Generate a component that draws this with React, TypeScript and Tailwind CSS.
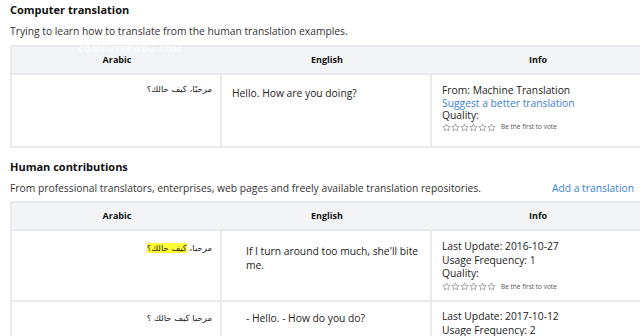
import React from 'react'

const font = { fontFamily: '"Open Sans", "DejaVu Sans", sans-serif' }
const arabic = { fontFamily: '"DejaVu Sans", "Noto Sans", sans-serif' }

function Stars() {
    return (
        <div className="flex items-center gap-[5px] h-[12px]">
            <div className="flex">
                {[0, 1, 2, 3, 4, 5].map((i) => (
                    <svg key={i} width="9" height="9" viewBox="0 0 24 24">
                        <path
                            d="M12 2.5l2.9 6.3 6.9.7-5.2 4.6 1.5 6.8L12 17.4 5.9 20.9l1.5-6.8L2.2 9.5l6.9-.7z"
                            fill="none"
                            stroke="#777"
                            strokeWidth="1.6"
                            strokeLinejoin="round"
                        />
                    </svg>
                ))}
            </div>
            <span className="text-[6.5px] text-[#555]">Be the first to vote</span>
        </div>
    )
}

function Header({ watermark }: { watermark?: boolean }) {
    return (
        <div className="relative grid grid-cols-[210px_210px_212px] h-[28px] bg-[#f3f4f6] border-b-2 border-[#e9eaed] text-[9px] font-bold text-[#111]">
            <div className="flex items-center justify-center">Arabic</div>
            <div className="flex items-center justify-center">English</div>
            <div className="flex items-center justify-center">Info</div>
            {/* faint watermark over the header */}
            {watermark && (
                <span className="absolute left-[66px] top-[-5px] text-[9px] font-bold tracking-[0.5px] text-white/70 pointer-events-none">COMPUTERWDU.COM</span>
            )}
        </div>
    )
}

export default function App() {
    return (
        <div className="w-[640px] h-[336px] overflow-hidden bg-white text-[#222]" style={font}>
            <div className="pl-[10px] pt-[2px]">
                <h2 className="text-[11px] leading-[16px] font-bold text-[#111]">Computer translation</h2>
                <p className="mt-[5px] text-[10.3px] leading-[16px] text-[#333]">Trying to learn how to translate from the human translation examples.</p>

                <div className="mt-[6px] w-[632px] border-2 border-[#e9eaed]">
                    <Header watermark />
                    <div className="grid grid-cols-[210px_210px_212px] h-[71px] text-[10.3px]">
                        <div className="border-r-2 border-[#e9eaed] pr-[8px] pt-[8px] text-right text-[8.5px] leading-[13px]" dir="rtl" style={arabic}>
                            مرحبًا، كيف حالك؟
                        </div>
                        <div className="border-r-2 border-[#e9eaed] pl-[10px] pt-[12px] leading-[13px]">Hello. How are you doing?</div>
                        <div className="pl-[10px] pt-[9px] leading-[12.5px]">
                            <div>From: Machine Translation</div>
                            <div className="text-[#3b7fd4]">Suggest a better translation</div>
                            <div>Quality:</div>
                            <Stars />
                        </div>
                    </div>
                </div>

                <h2 className="mt-[11px] text-[11px] leading-[16px] font-bold text-[#111]">Human contributions</h2>
                <div className="mt-[5px] flex items-center justify-between w-[624px] text-[10.3px] leading-[16px]">
                    <p className="text-[#333]">From professional translators, enterprises, web pages and freely available translation repositories.</p>
                    <span className="text-[#3b7fd4]">Add a translation</span>
                </div>

                <div className="mt-[5px] w-[632px] border-2 border-[#e9eaed]">
                    <Header />
                    <div className="grid grid-cols-[210px_210px_212px] h-[71px] border-b-2 border-[#e9eaed] text-[10.3px]">
                        <div className="border-r-2 border-[#e9eaed] pr-[8px] pt-[11px] text-right text-[8.5px] leading-[13px]" dir="rtl" style={arabic}>
                            مرحبا، <span className="bg-[#ffff33]">كيف حالك؟</span>
                        </div>
                        <div className="border-r-2 border-[#e9eaed] pl-[24px] pr-[10px] pt-[13px] leading-[14px]">
                            If I turn around too much, she'll bite me.
                        </div>
                        <div className="pl-[10px] pt-[9px] leading-[13.5px]">
                            <div>Last Update: 2016-10-27</div>
                            <div>Usage Frequency: 1</div>
                            <div>Quality:</div>
                            <Stars />
                        </div>
                    </div>
                    <div className="grid grid-cols-[210px_210px_212px] h-[60px] text-[10.3px]">
                        <div className="border-r-2 border-[#e9eaed] pr-[8px] pt-[10px] text-right text-[8.5px] leading-[13px]" dir="rtl" style={arabic}>
                            مرحبا كيف حالك ؟
                        </div>
                        <div className="border-r-2 border-[#e9eaed] pl-[24px] pt-[9px] leading-[14px]">- Hello. - How do you do?</div>
                        <div className="pl-[10px] pt-[8px] leading-[13.5px]">
                            <div>Last Update: 2017-10-12</div>
                            <div>Usage Frequency: 2</div>
                        </div>
                    </div>
                </div>
            </div>
        </div>
    )
}
